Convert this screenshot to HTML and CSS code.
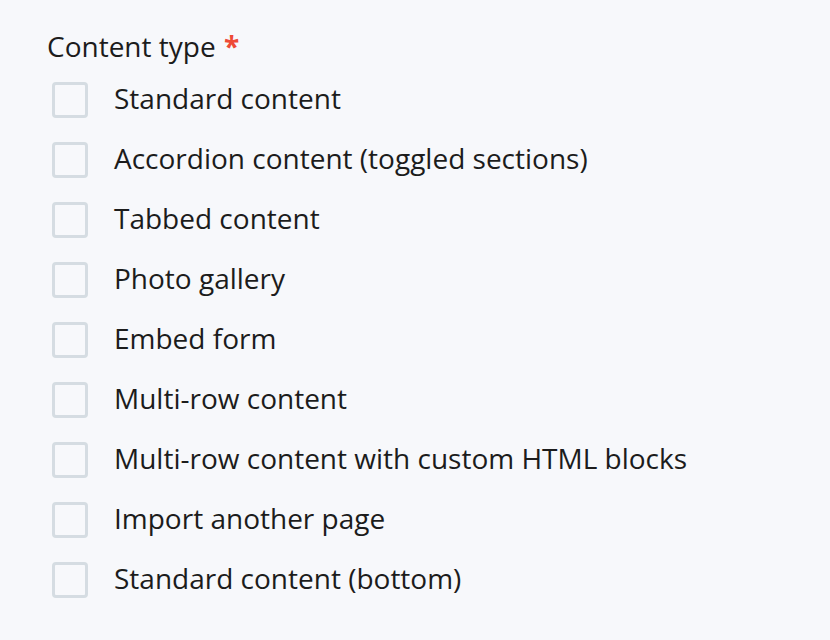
FILE: index.html
```html
<!DOCTYPE html>
<html lang="en">
<head>
  <meta charset="UTF-8" />
  <title>Content type</title>
  <link rel="stylesheet" href="styles.css">
</head>
<body>
  <div class="field">
    <div class="field-label">Content type <span class="required">*</span></div>
    <div class="options">
      <label class="option"><span class="box"></span>Standard content</label>
      <label class="option"><span class="box"></span>Accordion content (toggled sections)</label>
      <label class="option"><span class="box"></span>Tabbed content</label>
      <label class="option"><span class="box"></span>Photo gallery</label>
      <label class="option"><span class="box"></span>Embed form</label>
      <label class="option"><span class="box"></span>Multi-row content</label>
      <label class="option"><span class="box"></span>Multi-row content with custom HTML blocks</label>
      <label class="option"><span class="box"></span>Import another page</label>
      <label class="option"><span class="box"></span>Standard content (bottom)</label>
    </div>
  </div>
</body>
</html>
```

FILE: styles.css
```css
body {
  margin: 0;
  background: #f7f8fb;
  font-family: "Open Sans", Arial, sans-serif;
  color: #1c1c1c;
}

.field {
  padding: 27px 0 0 47px;
}

.field-label {
  font-size: 28px;
  line-height: 38px;
}

.required {
  color: #ee4a36;
  font-weight: bold;
  font-size: 28px;
  margin-left: 1px;
}

.options {
  display: flex;
  flex-direction: column;
  margin-top: 3px;
  padding-left: 5px;
}

.option {
  display: flex;
  align-items: center;
  height: 60px;
  font-size: 28px;
  cursor: pointer;
}

.box {
  width: 30px;
  height: 30px;
  border: 3px solid #d5dce2;
  border-radius: 4px;
  background: #f7f8fb;
  margin-right: 26px;
  margin-top: 3px;
  flex-shrink: 0;
}
```
